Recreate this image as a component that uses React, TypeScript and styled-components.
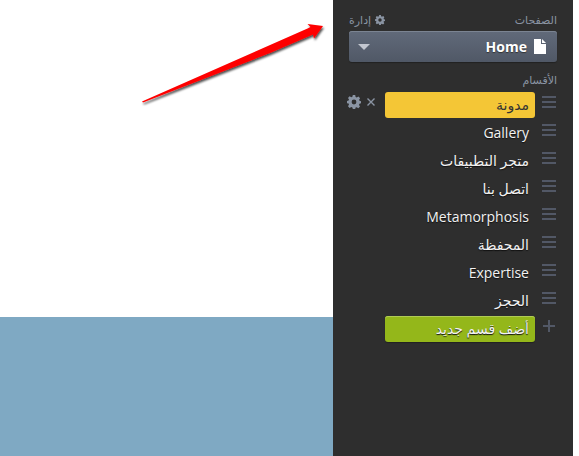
import React from "react";
import styled, { createGlobalStyle, css } from "styled-components";

const GlobalStyle = createGlobalStyle`
  * { box-sizing: border-box; }
  body { margin: 0; background: #fff; }
  button { margin: 0; padding: 0; border: 0; background: none; font: inherit; color: inherit; cursor: pointer; }
`;

const Page = styled.div`
  display: flex;
  min-height: 100vh;
  padding-right: 6px;
  font-family: "Open Sans", "DejaVu Sans", sans-serif;
`;

const Preview = styled.main`
  position: relative;
  flex: 1;
  display: grid;
  grid-template-rows: 317px 1fr;
`;

const Canvas = styled.section`
  background: #fff;
`;

const Band = styled.section`
  background: #7fa9c3;
`;

const Arrow = styled.svg`
  position: absolute;
  top: 16px;
  right: 0;
`;

const Sidebar = styled.aside`
  flex: 0 0 240px;
  min-width: 0;
  padding: 12px 16px;
  background: #2e2e2e;
  color: #fff;
`;

const Header = styled.header`
  display: flex;
  align-items: center;
  justify-content: space-between;
  height: 16px;
  margin-bottom: 3px;
`;

const Label = styled.h2`
  margin: 0;
  font-size: 11px;
  font-weight: 400;
  line-height: 16px;
  color: #8a94a3;
`;

const ManageButton = styled.button`
  display: flex;
  align-items: center;
  gap: 4px;
  font-size: 11px;
  line-height: 16px;
  color: #8a94a3;
`;

const PageSelect = styled.button`
  display: flex;
  align-items: center;
  width: 100%;
  height: 31px;
  margin-bottom: 10px;
  padding: 0 11px 0 9px;
  gap: 7px;
  border-radius: 3px;
  background: linear-gradient(#616a7a, #505866);
  box-shadow: inset 0 1px #7b8492, 0 1px 1px #222;
  color: #fff;
  font-size: 14px;
  font-weight: 700;
  text-shadow: 0 1px 1px #333;
`;

const Caret = styled.svg`
  margin-inline-start: auto;
`;

const SectionList = styled.ul`
  display: grid;
  gap: 2px;
  margin: 4px 0 0;
  padding: 0;
  list-style: none;
`;

const Row = styled.li`
  display: flex;
  align-items: flex-start;
  height: 26px;
`;

const IconButton = styled.button<{ $handle?: boolean }>`
  display: flex;
  flex-shrink: 0;
  color: #8a94a3;
  ${(p) => p.$handle && css`
    width: 22px;
    padding: 4px 1px 0 0;
    color: #525866;
  `}
`;

type Tone = "plain" | "active" | "add";

const tones = {
  plain: css``,
  active: css`
    background: #f4c636;
    color: #333;
    text-shadow: none;
  `,
  add: css`
    background: #94b71a;
    box-shadow: inset 0 1px #b0cb55, 0 1px 1px #222;
  `,
};

const SectionButton = styled.button<{ $tone: Tone }>`
  flex: 0 0 150px;
  height: 26px;
  padding: 0 6px;
  border-radius: 3px;
  color: #f2f2f2;
  font-size: 14px;
  line-height: 26px;
  text-align: right;
  text-shadow: 0 1px 1px #111;
  ${(p) => tones[p.$tone]}
`;

const Tools = styled.div`
  display: flex;
  align-items: center;
  gap: 6px;
  height: 20px;
  padding-right: 10px;
`;

const Gear = ({ size }: { size: number }) => (
  <svg width={size} height={size} viewBox="0 0 14 14" aria-hidden="true">
    <path
      fill="currentColor"
      fillRule="evenodd"
      d="M5.8 0h2.4l.4 1.9 1.1.5 1.8-1 1.6 1.8-1 1.6.4 1 1.5.4v2.1l-1.6.4-.4 1.2 1 1.6-1.7 1.7-1.6-1-1.1.4L8.2 14H5.8l-.4-1.6-1.1-.5-1.7 1-1.6-1.7 1-1.6L1.600 8.600 0 8.200V6l1.600-.4.4-1-1-1.600 1.600-1.700 1.700 1 1.100-.5zM7 4.600a2.400 2.400 0 1 0 0 4.800 2.400 2.400 0 0 0 0-4.800z"
    />
  </svg>
);

const Bars = () => (
  <svg width="14" height="12" viewBox="0 0 14 12" aria-hidden="true">
    <path fill="currentColor" d="M0 0h14v2H0zM0 5h14v2H0zM0 10h14v2H0z" />
  </svg>
);

const Plus = () => (
  <svg width="14" height="12" viewBox="0 0 14 12" aria-hidden="true">
    <path fill="currentColor" d="M6 0h2v5h5v2H8v5H6V7H1V5h5z" />
  </svg>
);

const sections = [
  "مدونة",
  "Gallery",
  "متجر التطبيقات",
  "اتصل بنا",
  "Metamorphosis",
  "المحفظة",
  "Expertise",
  "الحجز",
];

export default function App() {
  return (
    <>
      <GlobalStyle />
      <Page>
        <Preview>
          <Canvas />
          <Band />
          <Arrow width="200" height="100" viewBox="133 16 200 100" aria-hidden="true">
            <defs>
              <filter id="arrow-shadow" x="-10%" y="-10%" width="120%" height="130%">
                <feDropShadow dx="1" dy="2" stdDeviation="1.2" floodColor="#000" floodOpacity="0.7" />
              </filter>
            </defs>
            <path
              d="M142 101.500 307.500 28.500 310.500 27 307.500 24 323 26 314 38.500 313 34.500 270 53 143 102.500z"
              fill="#fe0000"
              filter="url(#arrow-shadow)"
            />
          </Arrow>
        </Preview>
        <Sidebar dir="rtl" lang="ar">
          <Header>
            <Label>الصفحات</Label>
            <ManageButton type="button">
              <Gear size={10} />
              إدارة
            </ManageButton>
          </Header>
          <PageSelect type="button" aria-haspopup="listbox">
            <svg width="12" height="15" viewBox="0 0 12 15" aria-hidden="true">
              <path fill="#fff" d="M0 0h7v5h5v10H0zM8 0l4 4H8z" />
            </svg>
            Home
            <Caret width="12" height="6" viewBox="0 0 12 6" aria-hidden="true">
              <path fill="#c3c7d0" d="M0 0h12L6 6z" />
            </Caret>
          </PageSelect>
          <Label>الأقسام</Label>
          <SectionList>
            {sections.map((name, i) => (
              <Row key={name}>
                <IconButton $handle type="button" aria-label={`نقل ${name}`}>
                  <Bars />
                </IconButton>
                <SectionButton type="button" $tone={i === 0 ? "active" : "plain"}>
                  {name}
                </SectionButton>
                {i === 0 && (
                  <Tools>
                    <IconButton type="button" aria-label="حذف">
                      <svg width="8" height="8" viewBox="0 0 8 8" aria-hidden="true">
                        <path d="M.5.5l7 7M7.500.5l-7 7" stroke="currentColor" strokeWidth="1.400" />
                      </svg>
                    </IconButton>
                    <IconButton type="button" aria-label="إعدادات">
                      <Gear size={14} />
                    </IconButton>
                  </Tools>
                )}
              </Row>
            ))}
            <Row>
              <IconButton $handle type="button" aria-label="إضافة">
                <Plus />
              </IconButton>
              <SectionButton type="button" $tone="add">
                أضف قسم جديد
              </SectionButton>
            </Row>
          </SectionList>
        </Sidebar>
      </Page>
    </>
  );
}
